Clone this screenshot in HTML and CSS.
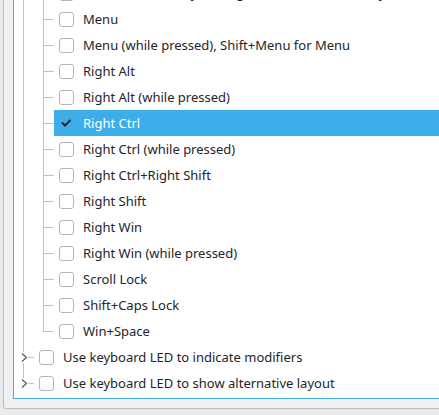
FILE: index.html
```html
<!DOCTYPE html>
<html>
<head>
<meta charset="utf-8">
<link rel="stylesheet" href="styles.css">
</head>
<body>
<div class="frame">
  <div class="tree">
    <div class="row"><span class="ind pipe"></span><span class="ind tee"></span><span class="item"><span class="cb"></span><span class="lbl">Left Win to first layout; Right Win/Menu to last layout</span></span></div>
    <div class="row"><span class="ind pipe"></span><span class="ind tee"></span><span class="item"><span class="cb"></span><span class="lbl">Menu</span></span></div>
    <div class="row"><span class="ind pipe"></span><span class="ind tee"></span><span class="item"><span class="cb"></span><span class="lbl">Menu (while pressed), Shift+Menu for Menu</span></span></div>
    <div class="row"><span class="ind pipe"></span><span class="ind tee"></span><span class="item"><span class="cb"></span><span class="lbl">Right Alt</span></span></div>
    <div class="row"><span class="ind pipe"></span><span class="ind tee"></span><span class="item"><span class="cb"></span><span class="lbl">Right Alt (while pressed)</span></span></div>
    <div class="row"><span class="ind pipe"></span><span class="ind tee"></span><span class="item sel"><svg class="check" width="15" height="15" viewBox="0 0 15 15"><path d="M3 6.5 L6 9.5 L11.5 4" fill="none" stroke="#232629" stroke-width="2"/></svg><span class="lbl">Right Ctrl</span></span></div>
    <div class="row"><span class="ind pipe"></span><span class="ind tee"></span><span class="item"><span class="cb"></span><span class="lbl">Right Ctrl (while pressed)</span></span></div>
    <div class="row"><span class="ind pipe"></span><span class="ind tee"></span><span class="item"><span class="cb"></span><span class="lbl">Right Ctrl+Right Shift</span></span></div>
    <div class="row"><span class="ind pipe"></span><span class="ind tee"></span><span class="item"><span class="cb"></span><span class="lbl">Right Shift</span></span></div>
    <div class="row"><span class="ind pipe"></span><span class="ind tee"></span><span class="item"><span class="cb"></span><span class="lbl">Right Win</span></span></div>
    <div class="row"><span class="ind pipe"></span><span class="ind tee"></span><span class="item"><span class="cb"></span><span class="lbl">Right Win (while pressed)</span></span></div>
    <div class="row"><span class="ind pipe"></span><span class="ind tee"></span><span class="item"><span class="cb"></span><span class="lbl">Scroll Lock</span></span></div>
    <div class="row"><span class="ind pipe"></span><span class="ind tee"></span><span class="item"><span class="cb"></span><span class="lbl">Shift+Caps Lock</span></span></div>
    <div class="row"><span class="ind pipe"></span><span class="ind ell"></span><span class="item"><span class="cb"></span><span class="lbl">Win+Space</span></span></div>
    <div class="row"><span class="ind exp"><svg width="20" height="26" viewBox="0 0 20 26"><path d="M8 9.5 L12.5 13.5 L8 17.5" fill="none" stroke="#4d4f52" stroke-width="1.1"/><path d="M14 13.5 H20" stroke="#c1c2c3"/></svg></span><span class="item"><span class="cb"></span><span class="lbl">Use keyboard LED to indicate modifiers</span></span></div>
    <div class="row"><span class="ind exp last"><svg width="20" height="26" viewBox="0 0 20 26"><path d="M8 9.5 L12.5 13.5 L8 17.5" fill="none" stroke="#4d4f52" stroke-width="1.1"/><path d="M14 13.5 H20" stroke="#c1c2c3"/></svg></span><span class="item"><span class="cb"></span><span class="lbl">Use keyboard LED to show alternative layout</span></span></div>
  </div>
</div>
</body>
</html>
```
FILE: styles.css
```css
html, body {
  margin: 0;
  height: 100%;
}
body {
  background: #e9eaeb;
  font-family: "Noto Sans", sans-serif;
  font-size: 13px;
  color: #232629;
  overflow: hidden;
}
.frame {
  margin: -31px -40px 0 3px;
  border: 1px solid #bbbcbd;
  border-radius: 3px;
  background: #eff0f1;
  padding: 9px;
}
.tree {
  border: 1px solid #3daee9;
  background: #ffffff;
  padding: 0 0 2px;
}
.row {
  display: flex;
  height: 26px;
}
.ind {
  flex: none;
  width: 20px;
  height: 26px;
  display: block;
}
.ind svg {
  display: block;
}
.pipe {
  background: linear-gradient(#c1c2c3, #c1c2c3) 9px 0 / 1px 100% no-repeat;
}
.tee {
  background:
    linear-gradient(#c1c2c3, #c1c2c3) 9px 0 / 1px 100% no-repeat,
    linear-gradient(#c1c2c3, #c1c2c3) 10px 13px / 10px 1px no-repeat;
}
.ell {
  background:
    linear-gradient(#c1c2c3, #c1c2c3) 9px 0 / 1px 14px no-repeat,
    linear-gradient(#c1c2c3, #c1c2c3) 10px 13px / 10px 1px no-repeat;
}
.exp {
  background:
    linear-gradient(#c1c2c3, #c1c2c3) 9px 0 / 1px 8px no-repeat,
    linear-gradient(#c1c2c3, #c1c2c3) 9px 19px / 1px 7px no-repeat;
}
.exp.last {
  background: linear-gradient(#c1c2c3, #c1c2c3) 9px 0 / 1px 8px no-repeat;
}
.item {
  flex: 1;
  display: flex;
  align-items: flex-start;
  padding-left: 5px;
  gap: 9px;
  white-space: nowrap;
  min-width: 0;
}
.item.sel {
  background: #3daee9;
  color: #ffffff;
}
.cb, .check {
  flex: none;
  width: 15px;
  height: 15px;
  margin-top: 6px;
  box-sizing: border-box;
}
.cb {
  border: 1px solid #b4b6b8;
  border-radius: 3px;
  background: #ffffff;
}
.check {
  display: block;
}
.lbl {
  line-height: 26px;
}
```
